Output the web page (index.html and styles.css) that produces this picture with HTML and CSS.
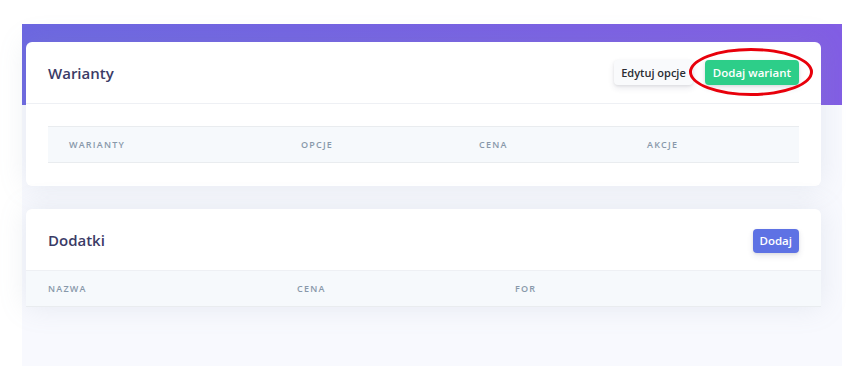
FILE: index.html
```html
<!DOCTYPE html>
<html lang="pl">
<head>
    <meta charset="UTF-8">
    <meta name="viewport" content="width=device-width, initial-scale=1.0">
    <title>Produkt - warianty</title>
    <link rel="stylesheet" href="styles.css">
</head>
<body>
    <div class="page">
        <div class="hero"></div>

        <div class="content">
            <!-- Warianty -->
            <div class="card">
                <div class="card-header">
                    <h3>Warianty</h3>
                    <div class="actions">
                        <button class="btn btn-light">Edytuj opcje</button>
                        <span class="marked">
                            <button class="btn btn-success">Dodaj wariant</button>
                            <span class="circle"></span>
                        </span>
                    </div>
                </div>
                <div class="card-body">
                    <table class="table table-variants">
                        <thead>
                            <tr>
                                <th>Warianty</th>
                                <th>Opcje</th>
                                <th>Cena</th>
                                <th>Akcje</th>
                            </tr>
                        </thead>
                        <tbody></tbody>
                    </table>
                </div>
            </div>

            <!-- Dodatki -->
            <div class="card">
                <div class="card-header">
                    <h3>Dodatki</h3>
                    <button class="btn btn-primary">Dodaj</button>
                </div>
                <table class="table table-addons">
                    <thead>
                        <tr>
                            <th>Nazwa</th>
                            <th>Cena</th>
                            <th>For</th>
                        </tr>
                    </thead>
                    <tbody></tbody>
                </table>
            </div>
        </div>
    </div>
</body>
</html>
```

FILE: styles.css
```css
body {
    margin: 0;
    padding-top: 24px;
    font-family: "Open Sans", sans-serif;
    background-color: #fff;
}

.page {
    margin-left: 22px;
    margin-right: 4px;
    height: 342px;
    background-color: #f8f9fe;
}

.hero {
    height: 81px;
    background: linear-gradient(87deg, #6c67e1 0, #825ee4 100%);
}

.content {
    margin-top: -63px;
    padding: 0 21px 0 4px;
}

.card {
    position: relative;
    background-color: #fff;
    border-radius: 6px;
    box-shadow: 0 0 28px 0 rgba(136, 152, 170, 0.17);
    margin-bottom: 23px;
}

.card-header {
    display: flex;
    align-items: center;
    justify-content: space-between;
    height: 61px;
    padding: 0 22px;
    border-bottom: 1px solid #eef0f4;
}

.card-header h3 {
    margin: 0;
    font-size: 15px;
    font-weight: 600;
    color: #3b3b66;
}

.actions {
    display: flex;
    align-items: center;
    gap: 12px;
}

.btn {
    font-family: "Open Sans", sans-serif;
    font-size: 11.5px;
    font-weight: 600;
    height: 25px;
    padding: 0 8px;
    border: none;
    border-radius: 4px;
    cursor: pointer;
    box-shadow: 0 3px 6px rgba(50, 50, 93, 0.11), 0 1px 3px rgba(0, 0, 0, 0.08);
}

.btn-light {
    background-color: #f9fafc;
    color: #2b2d33;
    font-size: 11px;
    padding: 0 7px;
}

.btn-success {
    background-color: #2dce89;
    color: #fff;
}

.btn-primary {
    background-color: #5e72e4;
    color: #fff;
    height: 24px;
    padding: 0 7px;
    margin-top: 2px;
}

.marked {
    position: relative;
    display: inline-block;
}

.marked .btn {
    display: block;
}

.circle {
    position: absolute;
    left: -16px;
    right: -14px;
    top: -12px;
    bottom: -11px;
    border: 3px solid #e8000b;
    border-radius: 50%;
    pointer-events: none;
}

.card-body {
    padding: 22px 22px 23px;
}

.table {
    width: 100%;
    border-collapse: collapse;
    table-layout: fixed;
}

.table th {
    height: 35px;
    padding: 0 21px;
    background-color: #f6f9fc;
    border-top: 1px solid #e9ecef;
    border-bottom: 1px solid #e9ecef;
    text-align: left;
    font-size: 9px;
    font-weight: 600;
    letter-spacing: 1.2px;
    text-transform: uppercase;
    color: #8898aa;
}

.table-variants th:nth-child(1) { width: 190px; }
.table-variants th:nth-child(2) { width: 136px; }
.table-variants th:nth-child(3) { width: 126px; }

.table-addons th {
    border-top: none;
    padding: 0 22px;
}

.table-addons th:nth-child(1) { width: 205px; }
.table-addons th:nth-child(2) { width: 174px; }
```
